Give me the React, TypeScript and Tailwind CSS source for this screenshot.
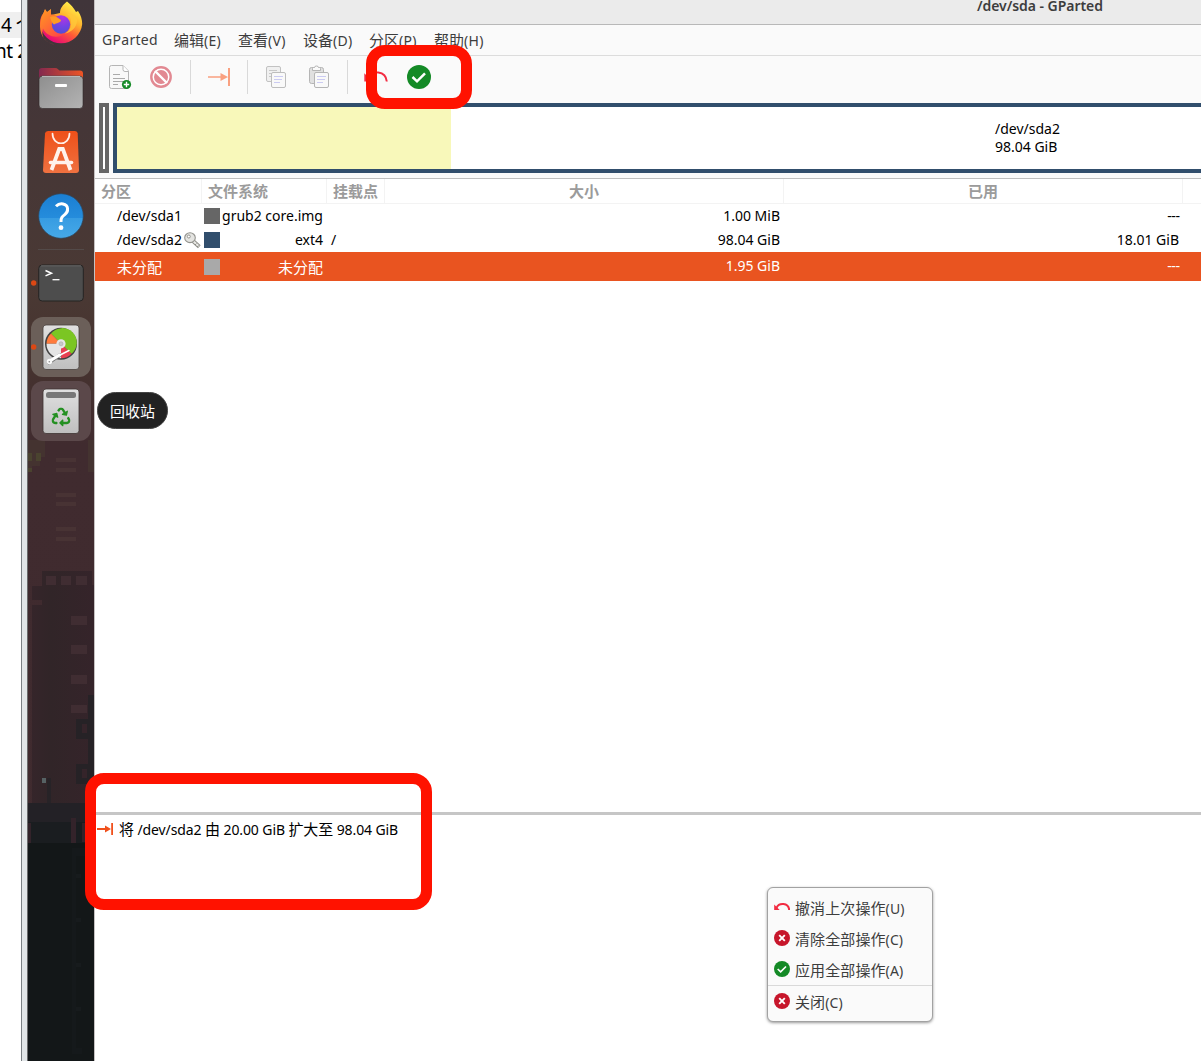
import React from "react";
import { FaRecycle } from "react-icons/fa";

const latin = "font-['Noto_Sans','Noto_Sans_CJK_SC',sans-serif]";

function Cjk({ children }: { children: React.ReactNode }) {
  return <span className="font-['Noto_Sans_CJK_SC',sans-serif] text-[15px]">{children}</span>;
}

/* ---------- dock ---------- */

function Wallpaper() {
  const lines = [458, 468, 492.5, 502, 527, 536.5];
  return (
    <svg className="absolute inset-0" width="66" height="1061" viewBox="28 0 66 1061" shapeRendering="crispEdges">
      <defs>
        <linearGradient id="wall" x1="0" y1="0" x2="0" y2="1">
          <stop offset="0" stopColor="#40353a" />
          <stop offset="0.12" stopColor="#453637" />
          <stop offset="0.27" stopColor="#4a3934" />
          <stop offset="0.34" stopColor="#46332f" />
          <stop offset="0.42" stopColor="#402b2f" />
          <stop offset="1" stopColor="#3f2a2e" />
        </linearGradient>
        <linearGradient id="tower" x1="0" y1="0" x2="1" y2="0">
          <stop offset="0" stopColor="#35252a" />
          <stop offset="0.3" stopColor="#312528" />
          <stop offset="1" stopColor="#35242a" />
        </linearGradient>
      </defs>
      <rect x="28" y="0" width="66" height="1061" fill="url(#wall)" />
      <path d="M28 440h17v17h-5v9h-8v6h-4zM88 440h6v32h-6z" fill="#443330" />
      <path d="M28 453h4v8h-4zM36 453h5v8h-5zM28 468h4v4h-4z" fill="#4a432f" />
      {lines.map((y) => (
        <rect key={y} x="56" y={y} width="20" height="4" fill="#483334" />
      ))}
      <path d="M42 571h50v14h2v218H32V605h10v-5H32v-14h10z" fill="url(#tower)" />
      <path d="M46 576h10v9h-10zM61 576h10v9h-10zM76 576h11v9h-11zM71 616h16v9h-16zM71 645h16v9h-16zM71 675h16v9h-16zM71 705h16v8h-16z" fill="#402d32" />
      <path d="M88 695h6v110h-6zM76 719h12v20h-12zM76 764h12v20h-12z" fill="#262226" />
      <path d="M82 724h5v9h-5zM82 769h5v9h-5z" fill="#35242a" />
      <rect x="47" y="778" width="4" height="27" fill="#272327" />
      <rect x="42" y="778" width="4" height="5" fill="#566264" />
      <rect x="28" y="803" width="66" height="20" fill="#232126" />
      <rect x="28" y="822" width="66" height="21" fill="#1a1d20" />
      <path d="M28 823h3v20h-3zM71 818h5v25h-5zM82 823h12v19h-12z" fill="#33232a" />
      <rect x="28" y="843" width="66" height="218" fill="#131718" />
      <path d="M72 848h16v8H76v192h6v6h-10z" fill="#15191b" />
      <path d="M76 874h5v4h-5zM76 918h5v4h-5zM76 963h5v4h-5zM76 1007h5v4h-5z" fill="#171b1d" />
    </svg>
  );
}

function DockSlot({ top, active, running, children }: { top: number; active?: string; running?: boolean; children: React.ReactNode }) {
  return (
    <div className={"relative ml-[3px] h-[60px] w-[60px] shrink-0 rounded-[12px] " + (active ?? "")}>
      <svg width="60" height="60" viewBox={`31 ${top} 60 60`}>
        {children}
        {running && <circle cx="33.7" cy={top + 30} r="2.7" fill="#dd4814" />}
      </svg>
    </div>
  );
}

function Dock() {
  return (
    <aside className="relative flex h-full w-[66px] shrink-0 flex-col overflow-hidden">
      <Wallpaper />
      <div className="-mt-[6px] flex flex-col gap-1">
        <DockSlot top={-6}>
          <defs>
            <linearGradient id="ffBody" x1="0.85" y1="0.1" x2="0.3" y2="1">
              <stop offset="0" stopColor="#fff04a" />
              <stop offset="0.35" stopColor="#ffb22d" />
              <stop offset="0.62" stopColor="#ff5a36" />
              <stop offset="1" stopColor="#e6007d" />
            </linearGradient>
            <linearGradient id="ffHead" x1="0" y1="0" x2="0.7" y2="1">
              <stop offset="0" stopColor="#ff9a1f" />
              <stop offset="1" stopColor="#ff3d4a" />
            </linearGradient>
            <radialGradient id="ffGlobe" cx="0.6" cy="0.1" r="1">
              <stop offset="0" stopColor="#b833e1" />
              <stop offset="0.5" stopColor="#7542e5" />
              <stop offset="1" stopColor="#4a52cf" />
            </radialGradient>
          </defs>
          <path d="M67 1.500C71 5 74 8 76 12l2-1c3 4 4.200 9 4.200 13A21.200 21.200 0 0 1 40 24c0-5 1-8 3.500-11l1.500-4 2 3 4-3v6l9-2c0-5 3-8 7-11.500z" fill="url(#ffBody)" />
          <path d="M43.500 13L45 9.500l2 3 4-3v5c3 0 6 1 9.500 4-1 4-5 3-6.500 6 0 6 5 10 11 8-5 7-18 5-22-4-3 9 4 15 12 16-9-1-15-9-15-18 0-5 1-9 3.500-13.500z" fill="url(#ffHead)" />
          <circle cx="61" cy="24.500" r="9.200" fill="url(#ffGlobe)" />
          <path d="M50 17c5-2 8 1 11 3 0 3-5 3-7 4.500-1.500-1-3-3.500-4-7.500z" fill="#ff9b25" />
          <path d="M61 13c7-2 11 5 10 12-.5 4-3 7-6 8.500 6-1 12-6 12-13 0-4-6-8-16-7.500z" fill="#ffc93a" opacity=".8" />
        </DockSlot>
        <DockSlot top={58}>
          <defs>
            <linearGradient id="folderBack" x1="0" y1="0" x2="1" y2="0">
              <stop offset="0" stopColor="#83294f" />
              <stop offset="1" stopColor="#ee5424" />
            </linearGradient>
            <linearGradient id="folderFront" x1="0" y1="0" x2="1" y2="1">
              <stop offset="0" stopColor="#8e8e8e" />
              <stop offset="1" stopColor="#b4b4b4" />
            </linearGradient>
          </defs>
          <path d="M39 84V71q0-3 3-3h13q2 0 3 1.200l1.500 1.300H80q3 0 3 3V84z" fill="url(#folderBack)" />
          <rect x="39" y="76" width="44" height="32.500" rx="3.500" fill="url(#folderFront)" stroke="#302829" strokeWidth=".6" />
          <path d="M42 76.400h38" stroke="#d0d0d0" strokeWidth=".8" />
          <rect x="55" y="84" width="12" height="3" rx="1" fill="#fff" />
        </DockSlot>
        <DockSlot top={122}>
          <defs>
            <linearGradient id="bag" x1="0" y1="0" x2="0" y2="1">
              <stop offset="0" stopColor="#ef5019" />
              <stop offset="1" stopColor="#ef7140" />
            </linearGradient>
          </defs>
          <path d="M48 131h27q2.500 0 2.700 2.500L79 170q0 3-3 3H46q-3 0-3-3l2-36.500q.3-2.500 3-2.500z" fill="url(#bag)" />
          <path d="M52.500 133.500c0 13 17 13 17 0" fill="none" stroke="#fff0e9" strokeWidth="1.700" strokeLinecap="round" />
          <path d="M51.500 170l7.700-21h3.600l7.700 21" fill="none" stroke="#fff3ec" strokeWidth="3.800" />
          <path d="M50.500 162.500h21" stroke="#fff3ec" strokeWidth="3.600" strokeLinecap="round" />
        </DockSlot>
        <DockSlot top={186}>
          <defs>
            <linearGradient id="help" x1="0" y1="0" x2="0" y2="1">
              <stop offset="0" stopColor="#1b7fd2" />
              <stop offset="0.54" stopColor="#258cdc" />
              <stop offset="0.55" stopColor="#379ce2" />
              <stop offset="1" stopColor="#46a9e8" />
            </linearGradient>
          </defs>
          <circle cx="61" cy="216" r="22.300" fill="url(#help)" stroke="#2c4961" strokeWidth=".7" />
          <path d="M56 206.300c2-2 4.500-2.800 7-2.300 6 1.200 5.500 7.500 2 10.300-3 2.400-4.200 3.700-4 7.700" fill="none" stroke="#fff" strokeWidth="3" />
          <circle cx="61" cy="227.700" r="2.400" fill="#fff" />
        </DockSlot>
      </div>
      <div className="relative mx-auto mt-[3px] h-px w-[46px] shrink-0 bg-[#534a49]" />
      <div className="mt-[3px] flex flex-col gap-1">
        <DockSlot top={253} running>
          <rect x="38.700" y="265" width="44.600" height="36" rx="3.500" fill="#4d4d4d" stroke="#252423" />
          <path d="M41 265.800h40" stroke="#777" strokeWidth=".7" />
          <path d="M45.500 270.500l6 2.700-6 2.700" fill="none" stroke="#fff" strokeWidth="1.500" />
          <path d="M52.500 279.700h7" stroke="#fff" strokeWidth="1.300" />
        </DockSlot>
        <DockSlot top={317} running active="bg-[#6b5f59]">
          <defs>
            <linearGradient id="disk" x1="0" y1="0" x2="0" y2="1">
              <stop offset="0" stopColor="#e0e0e0" />
              <stop offset="1" stopColor="#bfbfbf" />
            </linearGradient>
          </defs>
          <rect x="43" y="325" width="36" height="44.500" rx="3" fill="url(#disk)" stroke="#4a4240" strokeWidth=".8" />
          <circle cx="61" cy="343.800" r="16" fill="#414141" />
          <path d="M61 343.800L51 333.500A14.500 14.500 0 1 1 71.500 353.800z" fill="#7bc623" />
          <path d="M61 343.800H46.500A14.500 14.500 0 0 1 51 333.500z" fill="#ff7b3d" />
          <path d="M61 343.800l10.500 10a14.500 14.500 0 0 1-10.500 4.500z" fill="#e83f51" />
          <path d="M61 343.800v14.500A14.500 14.500 0 0 1 46.500 343.800z" fill="#e5e5e5" />
          <circle cx="61" cy="343.800" r="4.600" fill="#e6e6e6" />
          <circle cx="61" cy="343.800" r="2" fill="#c8c8c8" stroke="#aaa" strokeWidth=".6" />
          <path d="M49 362.500l11-7.500" stroke="#777" strokeWidth="3.600" strokeLinecap="round" />
          <path d="M49 361.500l10.500-6.500" stroke="#fff" strokeWidth="3.200" strokeLinecap="round" />
          <path d="M59 355.500l10-5" stroke="#fff" strokeWidth="1.500" strokeLinecap="round" />
          <circle cx="49.500" cy="361.500" r="2.700" fill="#fafafa" />
          <circle cx="49.300" cy="361.700" r=".8" fill="#888" />
        </DockSlot>
        <DockSlot top={381} active="bg-[#5b484a]">
          <rect x="43" y="389" width="36" height="44.500" rx="3" fill="url(#disk)" stroke="#3d3432" strokeWidth=".8" />
          <rect x="46" y="392" width="30" height="6" rx="2.500" fill="#777" />
          <FaRecycle x="51.500" y="407.500" size={19} color="#249022" />
        </DockSlot>
      </div>
    </aside>
  );
}

/* ---------- shared icons ---------- */

function CheckIcon({ size }: { size: number }) {
  return (
    <svg width={size} height={size} viewBox="0 0 24 24">
      <circle cx="12" cy="12" r="12" fill="#148a26" />
      <path d="M5.500 12l4.500 4.300 8-8" fill="none" stroke="#fff" strokeWidth="2.500" />
    </svg>
  );
}

function CrossIcon() {
  return (
    <svg width="16" height="16" viewBox="0 0 16 16">
      <circle cx="8" cy="8" r="8" fill="#c7162b" />
      <path d="M5.200 5.200l5.600 5.600M10.800 5.200l-5.600 5.600" stroke="#fff" strokeWidth="1.900" />
    </svg>
  );
}

function UndoIcon({ size, width }: { size: number; width: number }) {
  return (
    <svg width={size} height={size} viewBox="0 0 16 16">
      <path d="M2.500 8.800C5 3.200 14.500 3.500 15.200 11" fill="none" stroke="#f22c42" strokeWidth={width} />
      <path d="M.2 5.500V11h5.500z" fill="#f22c42" />
    </svg>
  );
}

function ResizeIcon({ color }: { color: string }) {
  return (
    <svg width="24" height="24" viewBox="0 0 24 24" fill={color}>
      <path d="M1 11.200h12.500V8l7.500 4-7.500 4v-3.200H1zM21 3h2v18h-2z" />
    </svg>
  );
}

function SmallResizeIcon() {
  return (
    <svg width="16" height="16" viewBox="0 0 16 16" fill="#f0501c">
      <path d="M0 7.100h8V4.500l6 3.500-6 3.500V8.900H0zM14.200 2H16v12h-1.800z" />
    </svg>
  );
}

/* ---------- toolbar ---------- */

function NewIcon() {
  return (
    <svg width="24" height="28" viewBox="108 63 24 28">
      <path d="M111.500 65.500h11.500l5.500 5.500v15.500q0 2-2 2h-15q-2 0-2-2v-19q0-2 2-2z" fill="#f8f8f8" stroke="#b5b5b5" />
      <path d="M123 65.500v4q0 2 2 2h3.500" fill="#fff" stroke="#b5b5b5" />
      <path d="M113 74.500h7M113 78.500h12M113 81.500h11M113 84.500h5" stroke="#aaa" />
      <circle cx="126.500" cy="84.500" r="4.600" fill="#148a26" />
      <path d="M123.800 84.500h5.400M126.500 81.800v5.400" stroke="#fff" strokeWidth="1.400" />
    </svg>
  );
}

function StopIcon() {
  return (
    <svg width="22" height="22" viewBox="0 0 22 22">
      <circle cx="11" cy="11" r="9.700" fill="#fff" stroke="#e28992" strokeWidth="2.400" />
      <circle cx="11" cy="11" r="7" fill="#e28992" />
      <path d="M5 5l12 12" stroke="#fff" strokeWidth="2.400" />
    </svg>
  );
}

function CopyIcon() {
  return (
    <svg width="22" height="24" viewBox="265 65 22 24">
      <rect x="266.500" y="66.500" width="14" height="15" rx="1.500" fill="#f0f0f0" stroke="#c2c2c2" />
      <path d="M269 70.500h8M269 73.500h4M269 76.500h3" stroke="#c8c8c8" />
      <rect x="271.500" y="72.500" width="14" height="15" rx="1.500" fill="#f9f9f9" stroke="#bdbdbd" />
      <path d="M274 76.500h9M274 79.500h8M274 82.500h6" stroke="#cbcbf2" />
    </svg>
  );
}

function PasteIcon() {
  return (
    <svg width="22" height="24" viewBox="308 65 22 24">
      <rect x="309.500" y="67.500" width="14" height="16" rx="2" fill="#e0e0e0" stroke="#b5b5b5" />
      <path d="M312.500 70.500v-2q0-1 1-1h1q0-1.500 2-1.500t2 1.500h1q1 0 1 1v2z" fill="#fafafa" stroke="#b5b5b5" />
      <rect x="314.500" y="72.500" width="14" height="15" rx="1.500" fill="#f9f9f9" stroke="#b5b5b5" />
      <path d="M317 76.500h9M317 79.500h8M317 82.500h6" stroke="#cbcbf2" />
    </svg>
  );
}

const Separator = ({ className }: { className: string }) => (
  <div className={"mt-[4px] h-[34px] w-px shrink-0 self-start bg-[#d9d9d9] " + className} />
);

function Toolbar() {
  return (
    <div className="flex h-[47px] shrink-0 items-center bg-[#fafafa] pb-[5px] pl-[13px]">
      <NewIcon />
      <div className="ml-[18px]"><StopIcon /></div>
      <Separator className="ml-[18px]" />
      <div className="ml-[16px]"><ResizeIcon color="#f9a080" /></div>
      <Separator className="ml-[16px]" />
      <div className="ml-[17px]"><CopyIcon /></div>
      <div className="ml-[21px]"><PasteIcon /></div>
      <Separator className="ml-[17px]" />
      <div className="ml-[16px]"><UndoIcon size={24} width={1.3} /></div>
      <div className="ml-[19px]"><CheckIcon size={24} /></div>
    </div>
  );
}

const menus: [string, string, string][] = [
  ["编辑", "(E)", "ml-[17px] w-[47px]"],
  ["查看", "(V)", "ml-[17px] w-[48px]"],
  ["设备", "(D)", "ml-[17px] w-[49px]"],
  ["分区", "(P)", "ml-[17px] w-[48px]"],
  ["帮助", "(H)", "ml-[17px] w-[49px]"],
];

function MenuBar() {
  return (
    <nav className="flex h-[31px] shrink-0 items-center whitespace-nowrap border-b border-[#dcdcdc] bg-[#fafafa] pl-[7px] text-[14px] leading-[30px] text-[#3d3d3d]">
      <span className="w-[55px] tracking-[0.3px]">GParted</span>
      {menus.map(([label, key, pos]) => (
        <span key={label} className={pos}>
          <Cjk>{label}</Cjk>
          <span className="tracking-[0.3px]">{key}</span>
        </span>
      ))}
    </nav>
  );
}

/* ---------- partition map and table ---------- */

function PartitionMap() {
  return (
    <div className="flex h-[75px] shrink-0 gap-1 bg-[#fafafa] pb-[5px] pl-1">
      <div className="w-[10px] shrink-0 border-4 border-[#666] bg-white" />
      <div className="relative flex w-[1120px] shrink-0 border-4 border-[#314e6c] bg-white">
        <div className="w-[334px] bg-[#f8f8ba]" />
        <div className="ml-[544px] pt-[13px] text-[14px] leading-[18px] text-black">
          <div>/dev/sda2</div>
          <div>98.04 GiB</div>
        </div>
      </div>
    </div>
  );
}

const cols = "grid grid-cols-[107px_125px_58px_399px_399px_18px]";

function KeyIcon() {
  return (
    <svg width="17" height="17" viewBox="0 0 17 17">
      <path d="M8.500 8.500l6.800 6.300" stroke="#8f8f89" strokeWidth="4" />
      <path d="M8.500 8.500l6.300 5.800" stroke="#e9e9e6" strokeWidth="2" />
      <path d="M11 13l1.500-1.500M13 15l1.500-1.500" stroke="#8f8f89" />
      <ellipse cx="6" cy="5.700" rx="5.300" ry="4.900" fill="#e4e4e1" stroke="#93938e" strokeWidth="1.100" />
      <circle cx="4.800" cy="4.500" r="1.500" fill="#fff" stroke="#93938e" />
    </svg>
  );
}

function Row({ name, icon, swatch, fs, mount, size, used, selected }: {
  name: React.ReactNode; icon?: boolean; swatch: string; fs: React.ReactNode; mount?: string; size: string; used: string; selected?: boolean;
}) {
  return (
    <div className={cols + " text-[14px] " + (selected ? "h-[29px] bg-[#e95420] leading-[28px] text-white" : "h-6 leading-[24px] text-black")}>
      <div className={"flex items-center pl-[22px] " + (selected ? "pt-px" : "")}>
        <span className="whitespace-nowrap">{name}</span>
        {icon && <span className="ml-[2px] shrink-0"><KeyIcon /></span>}
      </div>
      <div className="flex items-center justify-between pl-[2px] pr-[4px]">
        <span className={"h-4 w-4 shrink-0 " + swatch} />
        <span className={"whitespace-nowrap " + (selected ? "pt-px" : "")}>{fs}</span>
      </div>
      <div className="pl-[4px]">{mount}</div>
      <div className="pr-[4px] text-right">{size}</div>
      <div className="pr-[4px] text-right">
        <span className={used === "---" ? "-mr-[0.4px] tracking-[-0.5px]" : ""}>{used}</span>
      </div>
      <div />
    </div>
  );
}

function Table() {
  const head = "border-r border-[#f3f3f3]";
  return (
    <div className="flex h-[634px] shrink-0 flex-col border-t border-[#bfbfbf] bg-white">
      <div className={cols + " h-[25px] border-b border-[#f3f3f3] font-['Noto_Sans_CJK_SC',sans-serif] text-[15px] font-bold leading-[23px] text-[#9b9b9b]"}>
        <div className={head + " pl-[6px]"}>分区</div>
        <div className={head + " pl-[6px]"}>文件系统</div>
        <div className={head + " pl-[6px]"}>挂载点</div>
        <div className={head + " text-center"}>大小</div>
        <div className={head + " text-center"}>已用</div>
        <div />
      </div>
      <Row name="/dev/sda1" swatch="bg-[#666]" fs="grub2 core.img" size="1.00 MiB" used="---" />
      <Row name="/dev/sda2" icon swatch="bg-[#314e6c]" fs="ext4" mount="/" size="98.04 GiB" used="18.01 GiB" />
      <Row name={<Cjk>未分配</Cjk>} swatch="bg-[#a9a9a9] -mt-px" fs={<Cjk>未分配</Cjk>} size="1.95 GiB" used="---" selected />
    </div>
  );
}

function Operations() {
  return (
    <div className="flex-1 border-t-[3px] border-[#c6c6c6] bg-white">
      <div className="flex h-[28px] items-center pl-[2px] text-[14px] text-black">
        <SmallResizeIcon />
        <span className="ml-[6px] whitespace-pre pt-px tracking-[-0.1px]">
          <Cjk>将</Cjk> /dev/sda2 <Cjk>由</Cjk> 20.00 GiB <Cjk>扩大至</Cjk> 98.04 GiB
        </span>
      </div>
    </div>
  );
}

/* ---------- context menu ---------- */

function ContextItem({ icon, label, hint }: { icon: React.ReactNode; label: string; hint: string }) {
  return (
    <div className="flex h-[31px] items-center gap-[5px] whitespace-nowrap pl-[6px]">
      <span className="-mt-px">{icon}</span>
      <span className="pt-px tracking-[0.1px]">
        <Cjk>{label}</Cjk>
        {hint}
      </span>
    </div>
  );
}

function ContextMenu() {
  return (
    <div className="absolute left-[767px] top-[887px] h-[135px] w-[166px] rounded-[6px] border border-[#a2a2a2] bg-[#fafafa] pt-[4px] text-[14px] text-[#3d3d3d] shadow-[0_1px_3px_rgba(0,0,0,0.4)]">
      <ContextItem icon={<UndoIcon size={16} width={2} />} label="撤消上次操作" hint="(U)" />
      <ContextItem icon={<CrossIcon />} label="清除全部操作" hint="(C)" />
      <ContextItem icon={<CheckIcon size={16} />} label="应用全部操作" hint="(A)" />
      <div className="h-px bg-[#d9d9d9]" />
      <ContextItem icon={<CrossIcon />} label="关闭" hint="(C)" />
    </div>
  );
}

export default function App() {
  return (
    <div className={"relative flex h-[1061px] w-[1201px] overflow-hidden bg-white " + latin}>
      <div className="w-[21px] shrink-0 overflow-hidden whitespace-nowrap pt-[12px] text-[19px] leading-[26px] text-black">
        <div className="h-[26px] bg-[#efefef]"><span className="ml-px tracking-[-0.5px]">4 个</span></div>
        <div className="-ml-[5px] tracking-[-0.4px]">nt 2</div>
      </div>
      <div className="w-[7px] shrink-0 border-x border-l-[#7b8084] border-r-[#6a6b6c] bg-[#e1e5e7]" />
      <Dock />
      <main className="flex w-[1107px] shrink-0 flex-col border-l border-[#c5c1c1]">
        <header className="h-[25px] shrink-0 border-b border-[#b8b8b8] bg-[#ebebeb] pl-[882px]">
          <div className="-mt-[4px] whitespace-nowrap text-[14px] font-semibold leading-[20px] tracking-[-0.05px] text-[#3d3d3d]">/dev/sda - GParted</div>
        </header>
        <MenuBar />
        <Toolbar />
        <PartitionMap />
        <Table />
        <Operations />
      </main>
      <div className="absolute left-[97px] top-[392px] flex h-[37px] w-[71px] items-center justify-center rounded-full border border-[#444] bg-[#222] pt-[2px] text-white">
        <Cjk>回收站</Cjk>
      </div>
      <div className="absolute left-[365.5px] top-[45px] h-[64px] w-[106px] rounded-[19px] border-[11px] border-[#ff1200]" />
      <div className="absolute left-[84.5px] top-[773px] h-[137px] w-[347px] rounded-[19px] border-[11px] border-[#ff1200]" />
      <ContextMenu />
    </div>
  );
}
